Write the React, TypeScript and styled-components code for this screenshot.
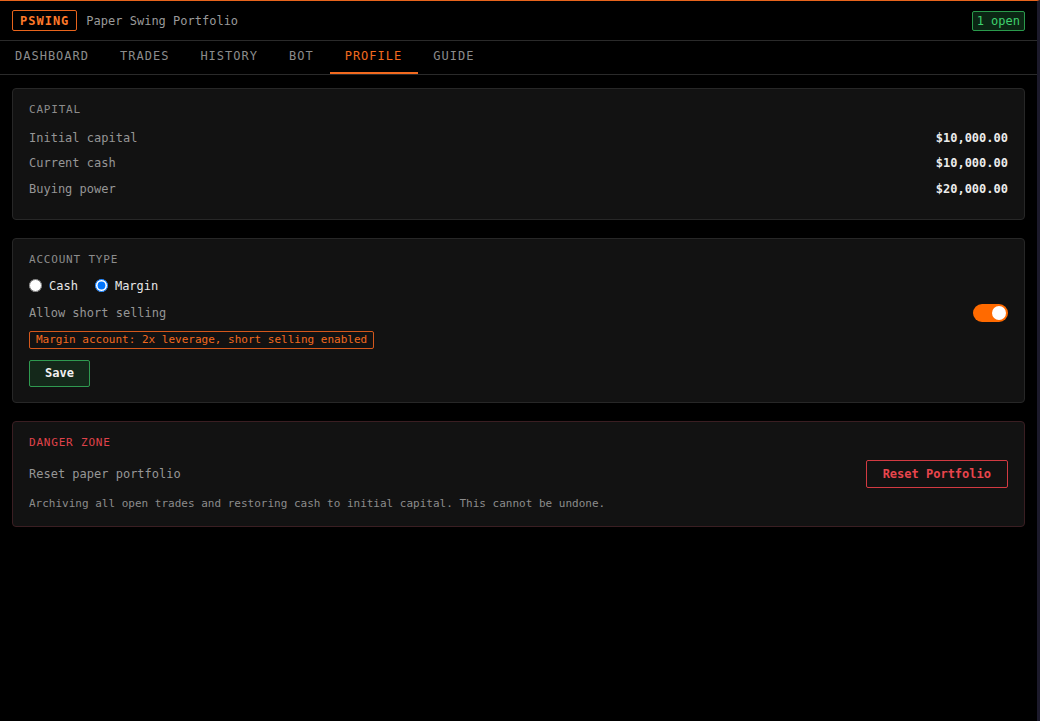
import React, { useState } from "react";
import styled, { createGlobalStyle } from "styled-components";

const GlobalStyle = createGlobalStyle`
  html, body { margin: 0; padding: 0; background: #000; }
  body { font-family: "DejaVu Sans Mono", "Liberation Mono", monospace; color: #ddd; }
  * { box-sizing: border-box; }
`;

const Shell = styled.div`
  width: 1040px;
  min-height: 721px;
  background: #000;
  border-top: 1px solid #e8641c;
  border-right: 3px solid #1c1a2b;
`;

const Header = styled.header`
  height: 40px;
  display: flex;
  align-items: center;
  justify-content: space-between;
  padding: 0 12px;
  border-bottom: 1px solid #2a2a2a;
`;

const Brand = styled.div`
  display: flex;
  align-items: center;
  gap: 9px;
`;

const Logo = styled.span`
  display: inline-flex;
  align-items: center;
  height: 21px;
  padding: 0 7px;
  border: 1px solid #e8641c;
  border-radius: 2px;
  color: #ff7a2a;
  font-weight: bold;
  font-size: 12px;
  letter-spacing: 1px;
`;

const Subtitle = styled.span`
  color: #9a9a9a;
  font-size: 12px;
`;

const OpenBadge = styled.span`
  display: inline-flex;
  align-items: center;
  height: 20px;
  padding: 0 4px;
  border: 1px solid #2a9a4c;
  border-radius: 2px;
  background: #0b2614;
  color: #3fd06e;
  font-size: 12px;
`;

const Nav = styled.nav`
  display: flex;
  border-bottom: 1px solid #2a2a2a;
`;

const Tab = styled.div<{ $active?: boolean }>`
  padding: 9px 16px 9px 15px;
  font-size: 12px;
  line-height: 13px;
  letter-spacing: 1px;
  color: ${(p) => (p.$active ? "#f26a1f" : "#8c8c8c")};
  border-bottom: 2px solid ${(p) => (p.$active ? "#f26a1f" : "transparent")};
`;

const Main = styled.main`
  display: flex;
  flex-direction: column;
  gap: 18px;
  padding: 13px 12px 12px 12px;
`;

const Card = styled.section<{ $danger?: boolean }>`
  background: #121212;
  border: 1px solid ${(p) => (p.$danger ? "#3a1e22" : "#272727")};
  border-radius: 4px;
  padding: 15px 16px;
  display: flex;
  flex-direction: column;
`;

const Title = styled.h3<{ $danger?: boolean }>`
  margin: 0;
  font-size: 11px;
  line-height: 12px;
  font-weight: normal;
  letter-spacing: 0.8px;
  color: ${(p) => (p.$danger ? "#e0434b" : "#8c8c8c")};
`;

const Rows = styled.div`
  margin: 9px 0 2px;
  display: flex;
  flex-direction: column;
`;

const Row = styled.div`
  display: flex;
  justify-content: space-between;
  align-items: center;
  height: 25.5px;
  font-size: 12px;
`;

const Label = styled.span`
  color: #969696;
  font-size: 12px;
`;

const Value = styled.span`
  color: #ececec;
  font-weight: bold;
`;

const RadioGroup = styled.div`
  display: flex;
  align-items: center;
  gap: 17px;
  margin-top: 11px;
  height: 18px;
`;

const RadioLabel = styled.label`
  display: flex;
  align-items: center;
  gap: 7px;
  font-size: 12px;
  color: #e6e6e6;
  input {
    margin: 0;
    width: 13px;
    height: 13px;
    color-scheme: light;
  }
`;

const SwitchRow = styled.div`
  display: flex;
  justify-content: space-between;
  align-items: center;
  margin-top: 9px;
  height: 18px;
`;

const Switch = styled.button<{ $on: boolean }>`
  position: relative;
  width: 35px;
  height: 18px;
  border: none;
  padding: 0;
  border-radius: 9px;
  background: ${(p) => (p.$on ? "#ff6a00" : "#444")};
  cursor: pointer;
  &::after {
    content: "";
    position: absolute;
    top: 2px;
    left: ${(p) => (p.$on ? "19px" : "2px")};
    width: 14px;
    height: 14px;
    border-radius: 50%;
    background: #fff;
  }
`;

const Notice = styled.div`
  align-self: flex-start;
  margin-top: 9px;
  height: 18px;
  display: flex;
  align-items: center;
  padding: 0 6px;
  border: 1px solid #d4581c;
  border-radius: 2px;
  color: #f26a1f;
  font-size: 11px;
`;

const SaveButton = styled.button`
  align-self: flex-start;
  margin-top: 11px;
  height: 27px;
  padding: 0 15px;
  border: 1px solid #2f9a50;
  border-radius: 2px;
  background: #14281a;
  color: #f0f0f0;
  font-family: inherit;
  font-weight: bold;
  font-size: 12px;
`;

const DangerRow = styled.div`
  display: flex;
  justify-content: space-between;
  align-items: center;
  margin-top: 11px;
`;

const ResetButton = styled.button`
  height: 28px;
  padding: 0 16px;
  border: 1px solid #d23a42;
  border-radius: 2px;
  background: transparent;
  color: #e8454d;
  font-family: inherit;
  font-weight: bold;
  font-size: 12px;
`;

const Description = styled.p`
  margin: 9px 0 0;
  font-size: 11px;
  line-height: 14px;
  color: #8c8c8c;
`;

const tabs = ["DASHBOARD", "TRADES", "HISTORY", "BOT", "PROFILE", "GUIDE"];

export default function App() {
  const [type, setType] = useState<"cash" | "margin">("margin");
  const [shortSell, setShortSell] = useState(true);
  return (
    <Shell>
      <GlobalStyle />
      <Header>
        <Brand>
          <Logo>PSWING</Logo>
          <Subtitle>Paper Swing Portfolio</Subtitle>
        </Brand>
        <OpenBadge>1 open</OpenBadge>
      </Header>
      <Nav>
        {tabs.map((t) => (
          <Tab key={t} $active={t === "PROFILE"}>
            {t}
          </Tab>
        ))}
      </Nav>
      <Main>
        <Card>
          <Title>CAPITAL</Title>
          <Rows>
            <Row>
              <Label>Initial capital</Label>
              <Value>$10,000.00</Value>
            </Row>
            <Row>
              <Label>Current cash</Label>
              <Value>$10,000.00</Value>
            </Row>
            <Row>
              <Label>Buying power</Label>
              <Value>$20,000.00</Value>
            </Row>
          </Rows>
        </Card>
        <Card>
          <Title>ACCOUNT TYPE</Title>
          <RadioGroup>
            <RadioLabel>
              <input type="radio" name="acct" checked={type === "cash"} onChange={() => setType("cash")} />
              Cash
            </RadioLabel>
            <RadioLabel>
              <input type="radio" name="acct" checked={type === "margin"} onChange={() => setType("margin")} />
              Margin
            </RadioLabel>
          </RadioGroup>
          <SwitchRow>
            <Label>Allow short selling</Label>
            <Switch $on={shortSell} onClick={() => setShortSell(!shortSell)} aria-label="Allow short selling" />
          </SwitchRow>
          <Notice>Margin account: 2x leverage, short selling enabled</Notice>
          <SaveButton>Save</SaveButton>
        </Card>
        <Card $danger>
          <Title $danger>DANGER ZONE</Title>
          <DangerRow>
            <Label>Reset paper portfolio</Label>
            <ResetButton>Reset Portfolio</ResetButton>
          </DangerRow>
          <Description>
            Archiving all open trades and restoring cash to initial capital. This cannot be undone.
          </Description>
        </Card>
      </Main>
    </Shell>
  );
}
